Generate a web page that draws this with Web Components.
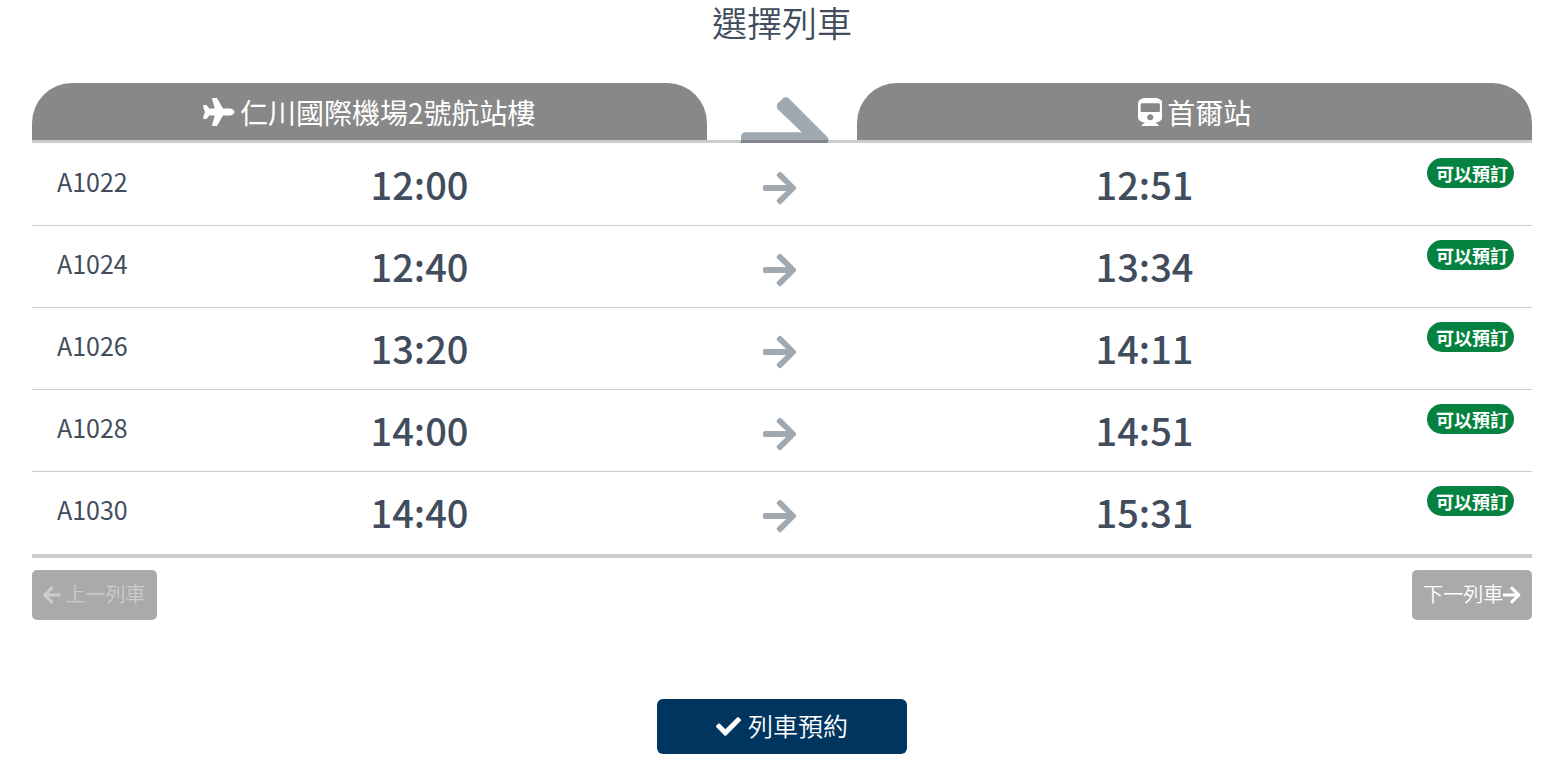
<!DOCTYPE html>
<html lang="zh-Hant">
<head>
<meta charset="utf-8">
<meta name="viewport" content="width=device-width, initial-scale=1">
<title>選擇列車</title>
<style>
  body {
    margin: 0;
    background: #fff;
    color: #414d5c;
    font-family: "Noto Sans CJK TC", sans-serif;
  }
</style>
</head>
<body>
<train-picker>
  <span slot="title">選擇列車</span>
  <train-table from="仁川國際機場2號航站樓" to="首爾站"></train-table>
  <pager-button slot="prev" disabled><fa-icon slot="before" name="arrow-left"></fa-icon>上一列車</pager-button>
  <pager-button slot="next">下一列車<fa-icon slot="after" name="arrow-right"></fa-icon></pager-button>
  <book-button slot="action">列車預約</book-button>
</train-picker>

<script>
const ICONS = {
  'arrow-right': [448, 'M190.5 66.9l22.2-22.2c9.4-9.4 24.6-9.4 33.9 0L441 239c9.4 9.4 9.4 24.6 0 33.9L246.6 467.3c-9.4 9.4-24.6 9.4-33.9 0l-22.2-22.2c-9.5-9.5-9.3-25 .4-34.3L311.4 296H24c-13.3 0-24-10.7-24-24v-32c0-13.3 10.7-24 24-24h287.4L190.9 101.2c-9.8-9.3-10-24.8-.4-34.3z'],
  'arrow-left': [448, 'M257.5 445.1l-22.2 22.2c-9.4 9.4-24.6 9.4-33.9 0L7 273c-9.4-9.4-9.4-24.6 0-33.9L201.4 44.7c9.4-9.4 24.6-9.4 33.9 0l22.2 22.2c9.5 9.5 9.3 25-.4 34.3L136.6 216H424c13.3 0 24 10.7 24 24v32c0 13.3-10.7 24-24 24H136.6l120.5 114.8c9.8 9.3 10 24.8.4 34.3z'],
  check: [512, 'M173.9 439.4l-166.4-166.4c-10-10-10-26.2 0-36.2l36.2-36.2c10-10 26.2-10 36.2 0L192 312.7 432.1 72.6c10-10 26.2-10 36.2 0l36.2 36.2c10 10 10 26.2 0 36.2l-294.4 294.4c-10 10-26.2 10-36.2 0z'],
  plane: [576, 'M480 192H365.7L260.6 8.1A16 16 0 0 0 246.7 0h-65.5c-10.6 0-18.3 10.2-15.4 20.4L214.9 192H112l-43.2-57.6c-3-4-7.8-6.4-12.8-6.4H16C5.6 128-2 137.8.5 147.9L32 256 .5 364.1C-2 374.2 5.6 384 16 384H56c5 0 9.8-2.4 12.8-6.4L112 320h102.9l-49.1 171.6c-2.9 10.2 4.8 20.4 15.4 20.4h65.5c5.7 0 11-3.1 13.9-8.1L365.7 320H480c35.4 0 96-28.7 96-64s-60.6-64-96-64z'],
  train: [448, 'M448 96v256c0 51.8-61.6 96-130 96l63 49.7c5.9 4.7 2.6 14.3-5 14.3H72c-7.6 0-10.9-9.6-5-14.3L130 448C61.8 448 0 404 0 352V96C0 43 64 0 128 0h192c65 0 128 43 128 96zm-48 136V120c0-13.3-10.7-24-24-24H72c-13.3 0-24 10.7-24 24v112c0 13.3 10.7 24 24 24h304c13.3 0 24-10.7 24-24zm-176 64c-30.9 0-56 25.1-56 56s25.1 56 56 56 56-25.1 56-56-25.1-56-56-56z'],
};

const TRAINS = [
  ['A1022', '12:00', '12:51'],
  ['A1024', '12:40', '13:34'],
  ['A1026', '13:20', '14:11'],
  ['A1028', '14:00', '14:51'],
  ['A1030', '14:40', '15:31'],
];

class FaIcon extends HTMLElement {
  connectedCallback() {
    if (this.shadowRoot) return;
    const [width, path] = ICONS[this.getAttribute('name')];
    this.attachShadow({ mode: 'open' }).innerHTML = `
      <style>
        :host { display: inline-block; line-height: 1; flex: none; }
        svg { display: block; height: 1em; fill: currentColor; }
      </style>
      <svg viewBox="0 0 ${width} 512" aria-hidden="true"><path d="${path}"/></svg>`;
  }
}

class StatusBadge extends HTMLElement {
  constructor() {
    super();
    this.attachShadow({ mode: 'open' }).innerHTML = `
      <style>
        :host {
          display: block;
          flex: none;
          padding: 0 6px 0 9px;
          border-radius: 15px;
          background: #05823f;
          color: #fff;
          font-size: 18px;
          font-weight: 700;
          line-height: 30px;
          white-space: nowrap;
        }
      </style>
      <slot></slot>`;
  }
}

class TrainTable extends HTMLElement {
  connectedCallback() {
    if (this.shadowRoot) return;
    const rows = TRAINS.map(([number, departs, arrives]) => `
      <tr>
        <th scope="row" class="number">${number}</th>
        <td class="time">${departs}</td>
        <td class="arrow"><fa-icon name="arrow-right"></fa-icon></td>
        <td class="time">${arrives}</td>
        <td><div class="status"><status-badge>可以預訂</status-badge></div></td>
      </tr>`).join('');
    this.attachShadow({ mode: 'open' }).innerHTML = `
      <style>
        :host { display: block; }
        table {
          width: 100%;
          table-layout: fixed;
          border-collapse: separate;
          border-spacing: 0;
          border-bottom: 4px solid #ccc;
        }
        .edge { width: 100px; }
        .middle { width: 10%; }
        th, td { padding: 0; vertical-align: top; }
        thead { position: relative; }
        /* translucent rule, runs over the big arrow */
        thead::after {
          content: "";
          position: absolute;
          inset: auto 0 1px;
          height: 3px;
          background: rgba(0, 0, 0, 0.2);
        }
        .station {
          display: flex;
          align-items: center;
          justify-content: center;
          gap: 5px;
          height: 57px;
          margin-bottom: 4px;
          border-radius: 40px 40px 0 0;
          background: #888;
          color: #fff;
          font-size: 28px;
          font-weight: 400;
          line-height: 40px;
        }
        .direction {
          display: flex;
          align-items: flex-start;
          justify-content: center;
          height: 60px;
          overflow: hidden;
          color: #a0a8b0;
          font-size: 100px;
        }
        .direction fa-icon { margin: 7px 0 0 6px; }
        tbody th, tbody td {
          box-sizing: border-box;
          height: 82px;
          border-bottom: 1px solid #ccc;
        }
        tbody tr:last-child > * { border-bottom: 0; }
        tbody .number {
          padding: 18px 0 0 25px;
          font-size: 25px;
          font-weight: 400;
          line-height: 38px;
          text-align: left;
        }
        .time {
          font-size: 38px;
          font-weight: 500;
          line-height: 80px;
          text-align: center;
        }
        .arrow {
          color: #a0a8b0;
          font-size: 38px;
          text-align: center;
        }
        .arrow fa-icon { margin: 25px 5px 0 0; }
        .status {
          display: flex;
          justify-content: flex-end;
          padding: 14px 18px 0 0;
        }
      </style>
      <table>
        <colgroup><col class="edge"><col><col class="middle"><col><col class="edge"></colgroup>
        <thead>
          <tr>
            <th colspan="2" scope="colgroup"><div class="station"><fa-icon name="plane"></fa-icon><span>${this.getAttribute('from')}</span></div></th>
            <td><div class="direction"><fa-icon name="arrow-right"></fa-icon></div></td>
            <th colspan="2" scope="colgroup"><div class="station"><fa-icon name="train"></fa-icon><span>${this.getAttribute('to')}</span></div></th>
          </tr>
        </thead>
        <tbody>${rows}</tbody>
      </table>`;
  }
}

class PagerButton extends HTMLElement {
  connectedCallback() {
    if (this.shadowRoot) return;
    this.attachShadow({ mode: 'open' }).innerHTML = `
      <style>
        :host { display: block; }
        button {
          display: flex;
          align-items: center;
          justify-content: center;
          min-width: 120px;
          height: 50px;
          padding: 0 11px;
          border: 0;
          border-radius: 5px;
          background: #aaa;
          color: #fff;
          font: inherit;
          font-size: 20px;
          font-weight: 350;
          white-space: nowrap;
          cursor: pointer;
        }
        button:disabled { color: #ccc; cursor: default; }
        slot[name="before"]::slotted(*) { margin-right: 5px; }
        span { padding-bottom: 3px; }
      </style>
      <button type="button"><slot name="before"></slot><span><slot></slot></span><slot name="after"></slot></button>`;
    this.shadowRoot.querySelector('button').disabled = this.hasAttribute('disabled');
  }
}

class BookButton extends HTMLElement {
  constructor() {
    super();
    this.attachShadow({ mode: 'open' }).innerHTML = `
      <style>
        :host { display: block; }
        button {
          display: flex;
          align-items: center;
          justify-content: center;
          gap: 7px;
          min-width: 250px;
          height: 55px;
          border: 0;
          border-radius: 6px;
          background: #003560;
          color: #fff;
          font: inherit;
          font-size: 25px;
          font-weight: 350;
          cursor: pointer;
        }
        span { padding-bottom: 3px; }
      </style>
      <button type="button"><fa-icon name="check"></fa-icon><span><slot></slot></span></button>`;
  }
}

class TrainPicker extends HTMLElement {
  constructor() {
    super();
    this.attachShadow({ mode: 'open' }).innerHTML = `
      <style>
        :host { display: block; padding: 0 35px 11px 32px; }
        h1 {
          margin: 0 0 39px;
          font-size: 35px;
          font-weight: 350;
          line-height: 44px;
          text-align: center;
        }
        nav {
          display: flex;
          justify-content: space-between;
          margin-top: 12px;
        }
        .action {
          display: flex;
          justify-content: center;
          margin-top: 79px;
        }
      </style>
      <h1><slot name="title"></slot></h1>
      <slot></slot>
      <nav><slot name="prev"></slot><slot name="next"></slot></nav>
      <div class="action"><slot name="action"></slot></div>`;
  }
}

customElements.define('fa-icon', FaIcon);
customElements.define('status-badge', StatusBadge);
customElements.define('train-table', TrainTable);
customElements.define('pager-button', PagerButton);
customElements.define('book-button', BookButton);
customElements.define('train-picker', TrainPicker);
</script>
</body>
</html>
